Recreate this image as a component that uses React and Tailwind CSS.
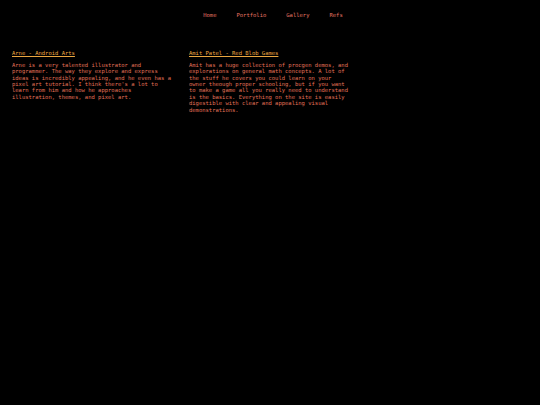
import React from 'react';

const navLinks = ['Home', 'Portfolio', 'Gallery', 'Refs'];

const entries = [
  {
    title: 'Arne - Android Arts',
    body: "Arne is a very talented illustrator and programmer. The way they explore and express ideas is incredibly appealing, and he even has a pixel art tutorial. I think there's a lot to learn from him and how he approaches illustration, themes, and pixel art.",
  },
  {
    title: 'Amit Patel - Red Blob Games',
    body: 'Amit has a huge collection of procgen demos, and explorations on general math concepts. A lot of the stuff he covers you could learn on your owner theough proper schooling, but if you want to make a game all you really need to understand is the basics. Everything on the site is easily digestible with clear and appealing visual demonstrations.',
  },
];

export default function App() {
  return (
    <div className="w-[540px] h-[405px] bg-black font-['DejaVu_Sans_Mono',monospace] text-[5.5px] leading-[6.4px] text-[#e07258]">
      <nav className="flex justify-center gap-[20px] pt-[12px] pl-[6px]">
        {navLinks.map((link) => (
          <a key={link} href="#" className="text-[#e37462]">
            {link}
          </a>
        ))}
      </nav>

      <div className="flex gap-[17px] pl-[12px] pt-[32px]">
        {entries.map((entry) => (
          <div key={entry.title} className="w-[160px]">
            <a href="#" className="underline text-[#eaa640]">
              {entry.title}
            </a>
            <p className="mt-[5px]">{entry.body}</p>
          </div>
        ))}
      </div>
    </div>
  );
}
